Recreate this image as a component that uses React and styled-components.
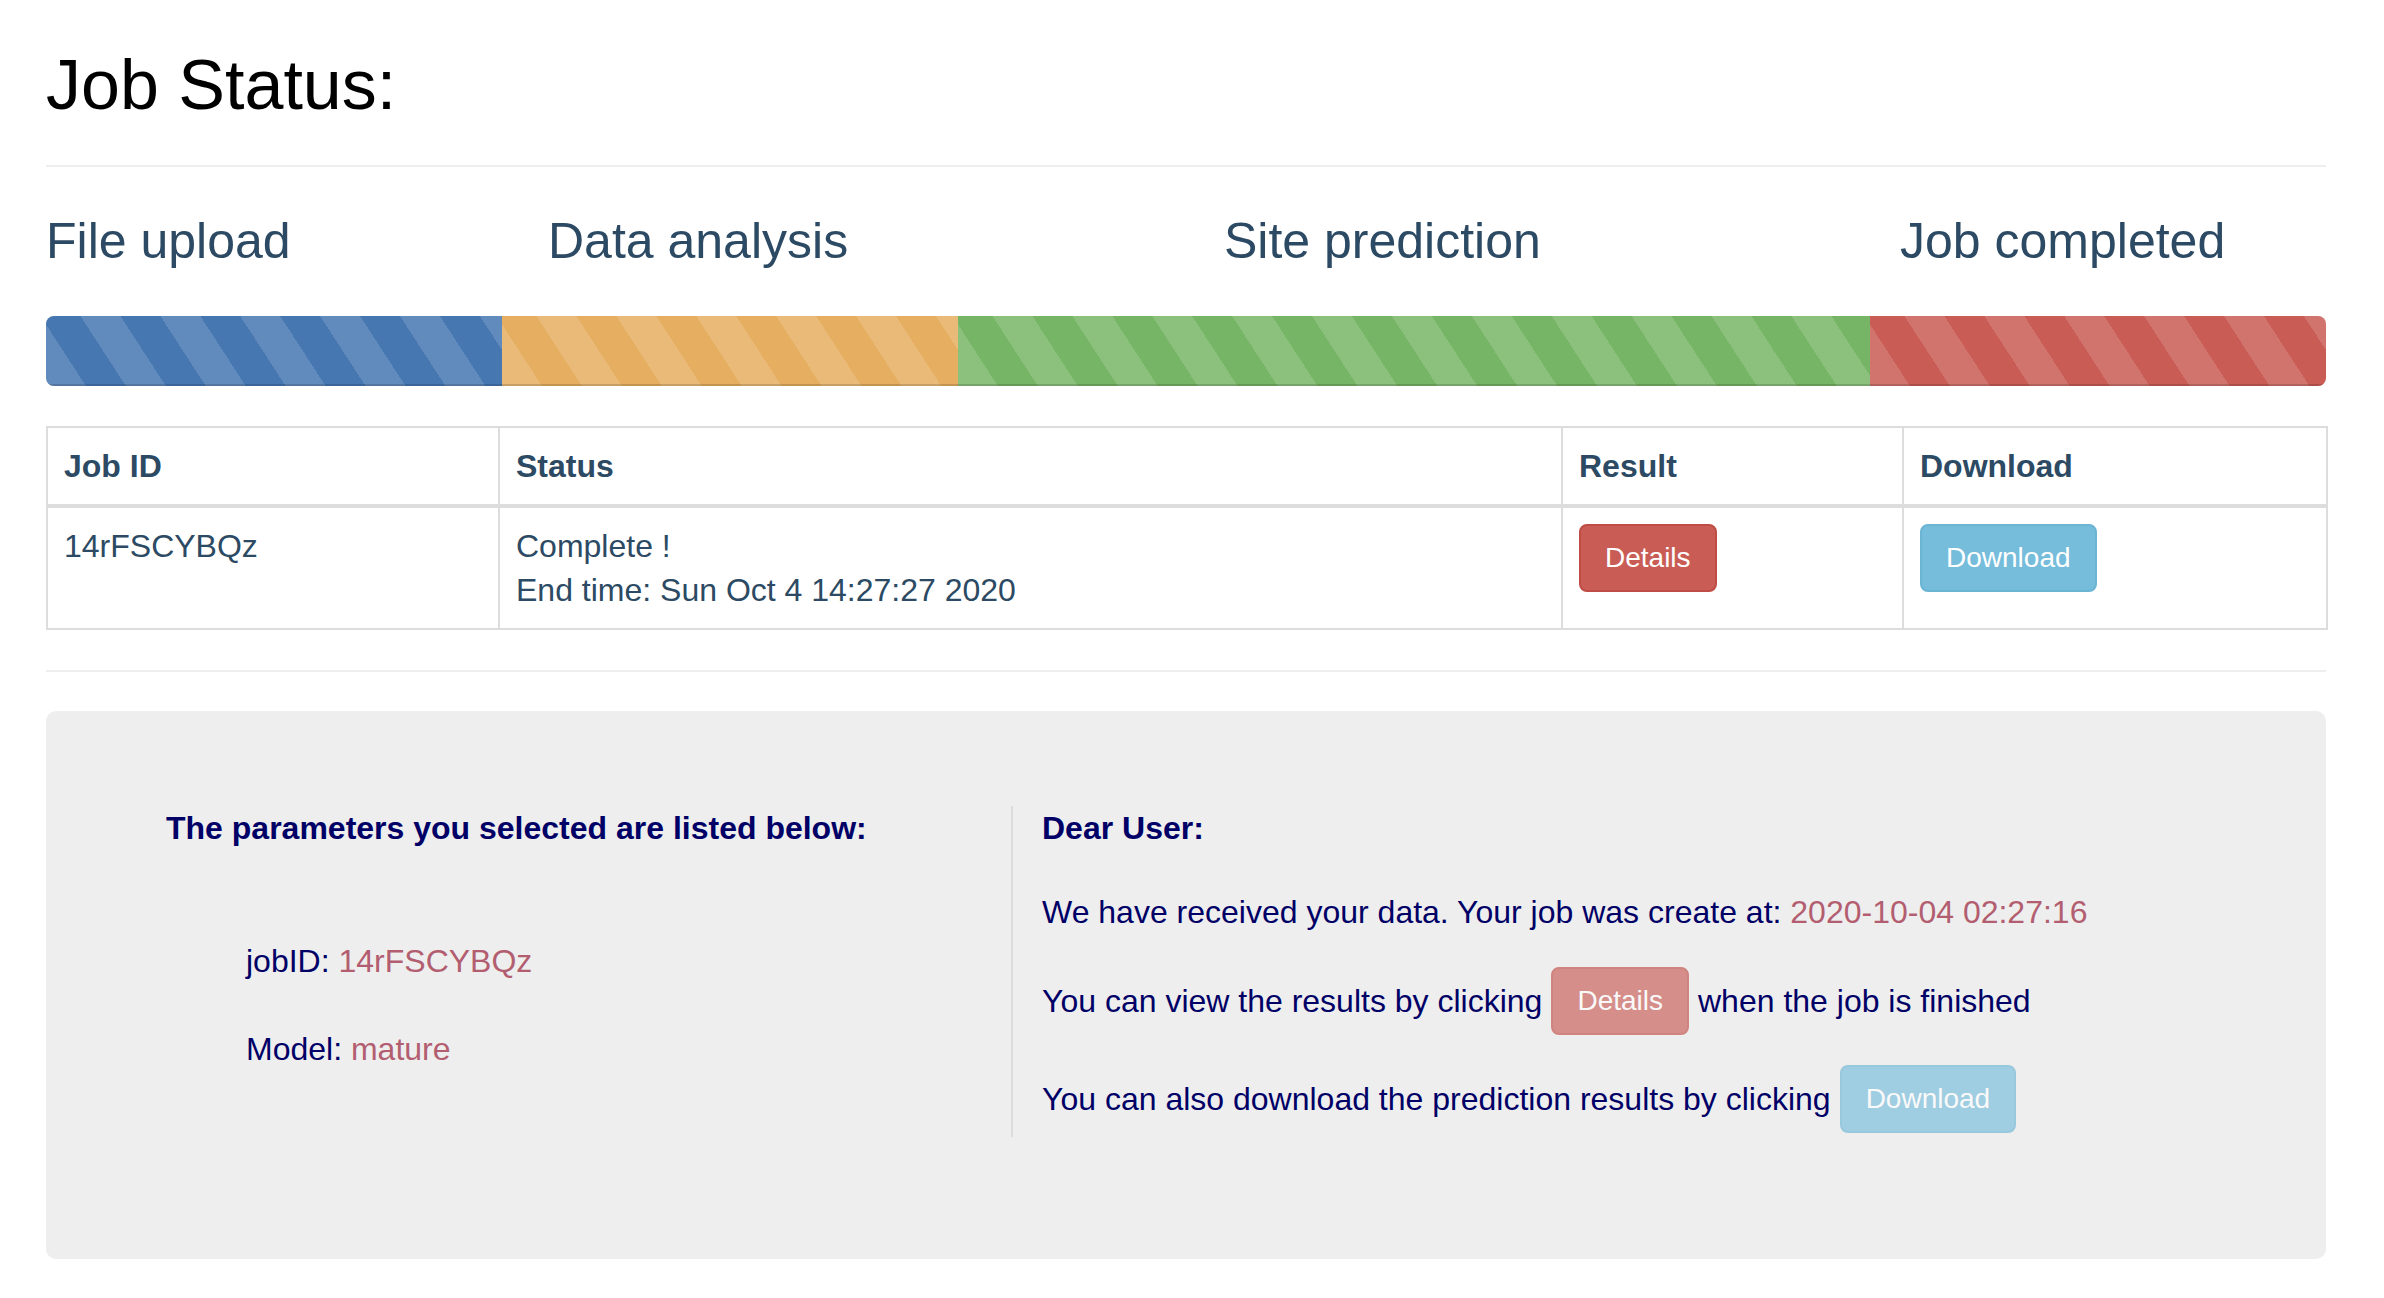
import React from 'react';
import styled, { createGlobalStyle } from 'styled-components';

const GlobalStyle = createGlobalStyle`
  html, body {
    margin: 0;
    padding: 0;
    background: #fff;
  }
  body {
    font-family: "Liberation Sans", Arial, Helvetica, sans-serif;
  }
  * {
    box-sizing: border-box;
  }
`;

const Page = styled.div`
  width: 2280px;
  margin-left: 46px;
  padding-bottom: 41px;
`;

const Title = styled.h1`
  margin: 47px 0 0;
  font-size: 70px;
  line-height: 77px;
  font-weight: 400;
  color: #000;
`;

const Rule = styled.hr`
  margin: ${p => p.$top}px 0 0;
  border: 0;
  border-top: 2px solid #eee;
  height: 0;
`;

const Stages = styled.div`
  display: grid;
  grid-template-columns: 502px 676px 676px 1fr;
  margin-top: 47px;
`;

const StageLabel = styled.h2`
  margin: 0;
  font-size: 50px;
  line-height: 54px;
  font-weight: 400;
  color: #2c4a63;
`;

const Progress = styled.div`
  display: flex;
  height: 70px;
  margin-top: 48px;
  border-radius: 8px;
  overflow: hidden;
  background: #f5f5f5;
`;

const Segment = styled.div`
  flex: 0 0 ${p => p.$pct}%;
  background-color: ${p => p.$color};
  background-image: repeating-linear-gradient(
    57deg,
    rgba(255, 255, 255, 0.15) 0 33.5px,
    transparent 33.5px 67px
  );
  box-shadow: inset 0 -2px 0 rgba(0, 0, 0, 0.15);
`;

const Table = styled.table`
  width: 100%;
  margin-top: 40px;
  border-collapse: collapse;
  table-layout: fixed;
  border: 2px solid #ddd;
  font-size: 32px;
  color: #2c4a63;

  th, td {
    border: 2px solid #ddd;
    padding: 16px;
    line-height: 44px;
    text-align: left;
    vertical-align: top;
  }

  th {
    font-weight: 700;
    vertical-align: bottom;
    border-bottom-width: 4px;
  }
`;

const Button = styled.button`
  display: inline-block;
  padding: 12px 24px;
  font-family: inherit;
  font-size: 28px;
  line-height: 40px;
  color: #fff;
  background: ${p => p.$bg};
  border: 2px solid ${p => p.$border};
  border-radius: 8px;
  opacity: ${p => (p.$faded ? 0.65 : 1)};
  vertical-align: middle;
  cursor: pointer;
`;

const Well = styled.div`
  display: grid;
  grid-template-columns: 845px 1fr;
  margin-top: 39px;
  padding: 95px 0 122px 120px;
  background: #eee;
  border-radius: 10px;
  color: #000066;
  font-size: 32px;
  line-height: 44px;
`;

const LeftCol = styled.div``;

const RightCol = styled.div`
  border-left: 2px solid #dcdcdc;
  padding: 0 0 4px 29px;
`;

const Heading = styled.div`
  font-weight: 700;
`;

const Param = styled.div`
  margin-top: ${p => p.$top}px;
  padding-left: 80px;
`;

const Line = styled.div`
  display: flex;
  align-items: center;
  gap: 9px;
  margin-top: ${p => p.$top}px;
  white-space: nowrap;
`;

const Value = styled.span`
  color: #b35e70;
`;

const stages = [
  { label: 'File upload', pct: 20, color: '#4677b1' },
  { label: 'Data analysis', pct: 20, color: '#e6ae60' },
  { label: 'Site prediction', pct: 40, color: '#77b566' },
  { label: 'Job completed', pct: 20, color: '#c95c55' },
];

const details = { bg: '#c95c55', border: '#bf4c45' };
const download = { bg: '#76bcdb', border: '#6ab4d4' };

export default function App() {
  return (
    <>
      <GlobalStyle />
      <Page>
        <Title>Job Status:</Title>
        <Rule $top={41} />

        <Stages>
          {stages.map(s => (
            <StageLabel key={s.label}>{s.label}</StageLabel>
          ))}
        </Stages>

        <Progress>
          {stages.map(s => (
            <Segment key={s.label} $pct={s.pct} $color={s.color} />
          ))}
        </Progress>

        <Table>
          <colgroup>
            <col style={{ width: 452 }} />
            <col style={{ width: 1063 }} />
            <col style={{ width: 341 }} />
            <col style={{ width: 424 }} />
          </colgroup>
          <thead>
            <tr>
              <th>Job ID</th>
              <th>Status</th>
              <th>Result</th>
              <th>Download</th>
            </tr>
          </thead>
          <tbody>
            <tr>
              <td>14rFSCYBQz</td>
              <td>
                Complete !<br />
                End time: Sun Oct 4 14:27:27 2020
              </td>
              <td>
                <Button $bg={details.bg} $border={details.border}>Details</Button>
              </td>
              <td>
                <Button $bg={download.bg} $border={download.border}>Download</Button>
              </td>
            </tr>
          </tbody>
        </Table>

        <Rule $top={40} />

        <Well>
          <LeftCol>
            <Heading>The parameters you selected are listed below:</Heading>
            <Param $top={89}>
              jobID: <Value>14rFSCYBQz</Value>
            </Param>
            <Param $top={44}>
              Model: <Value>mature</Value>
            </Param>
          </LeftCol>

          <RightCol>
            <Heading>Dear User:</Heading>
            <Line $top={40}>
              <span>
                We have received your data. Your job was create at: <Value>2020-10-04 02:27:16</Value>
              </span>
            </Line>
            <Line $top={33}>
              <span>You can view the results by clicking</span>
              <Button $faded $bg={details.bg} $border={details.border}>Details</Button>
              <span>when the job is finished</span>
            </Line>
            <Line $top={30}>
              <span>You can also download the prediction results by clicking</span>
              <Button $faded $bg={download.bg} $border={download.border}>Download</Button>
            </Line>
          </RightCol>
        </Well>
      </Page>
    </>
  );
}
